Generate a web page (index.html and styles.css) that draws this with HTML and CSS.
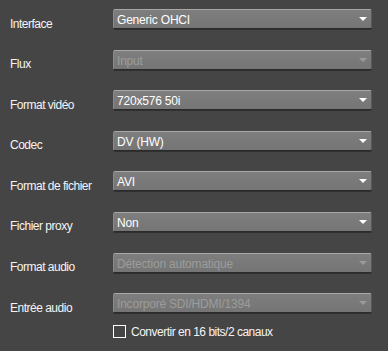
FILE: index.html
```html
<!DOCTYPE html>
<html lang="fr">
<head>
    <meta charset="UTF-8">
    <title>Paramètres de capture</title>
    <link rel="stylesheet" href="styles.css">
</head>
<body>
    <div class="panel">
        <div class="row">
            <span class="label">Interface</span>
            <div class="select">Generic OHCI<span class="arrow"></span></div>
        </div>
        <div class="row">
            <span class="label">Flux</span>
            <div class="select disabled">Input<span class="arrow"></span></div>
        </div>
        <div class="row">
            <span class="label">Format vidéo</span>
            <div class="select">720x576 50i<span class="arrow"></span></div>
        </div>
        <div class="row">
            <span class="label">Codec</span>
            <div class="select">DV (HW)<span class="arrow"></span></div>
        </div>
        <div class="row">
            <span class="label">Format de fichier</span>
            <div class="select">AVI<span class="arrow"></span></div>
        </div>
        <div class="row">
            <span class="label">Fichier proxy</span>
            <div class="select">Non<span class="arrow"></span></div>
        </div>
        <div class="row">
            <span class="label">Format audio</span>
            <div class="select disabled">Détection automatique<span class="arrow"></span></div>
        </div>
        <div class="row">
            <span class="label">Entrée audio</span>
            <div class="select disabled">Incorporé SDI/HDMI/1394<span class="arrow"></span></div>
        </div>
        <div class="check-row">
            <span class="box"></span>
            <span class="check-label">Convertir en 16 bits/2 canaux</span>
        </div>
    </div>
</body>
</html>
```

FILE: styles.css
```css
body {
    margin: 0;
    background-color: #454545;
    font-family: 'Liberation Sans', Arial, sans-serif;
    font-size: 12px;
    color: #ffffff;
}
.panel {
    display: flex;
    flex-direction: column;
    gap: 20.6px;
    padding: 9px 0 0 0;
    width: 388px;
    height: 351px;
    box-sizing: border-box;
}
.row {
    display: flex;
    align-items: center;
    height: 20px;
}
.label {
    width: 113px;
    padding-left: 10px;
    padding-top: 9px;
    box-sizing: border-box;
    color: #f4f4f4;
    letter-spacing: -0.5px;
}
.select {
    position: relative;
    width: 259px;
    height: 20px;
    box-sizing: border-box;
    background: linear-gradient(#7e7e7e, #757575);
    border-top: 1px solid #a8a8a8;
    border-left: 1px solid #8a8a8a;
    border-right: 1px solid #5a5a5a;
    border-bottom: 1px solid #2a2a2a;
    border-radius: 2px;
    box-shadow: 0 1px 0 #303030;
    padding: 3px 0 0 3px;
    color: #ffffff;
    letter-spacing: -0.2px;
}
.select.disabled {
    color: #9c9c9c;
}
.arrow {
    position: absolute;
    right: 4px;
    top: 7px;
    width: 0;
    height: 0;
    border-left: 4px solid transparent;
    border-right: 4px solid transparent;
    border-top: 4px solid #ffffff;
}
.select.disabled .arrow {
    border-top-color: #9a9a9a;
}
.check-row {
    display: flex;
    align-items: center;
    margin-top: -9px;
    padding-left: 113px;
}
.box {
    width: 13px;
    height: 13px;
    box-sizing: border-box;
    border: 1px solid #ffffff;
}
.check-label {
    margin-left: 5px;
    color: #f4f4f4;
    letter-spacing: -0.5px;
}
```
